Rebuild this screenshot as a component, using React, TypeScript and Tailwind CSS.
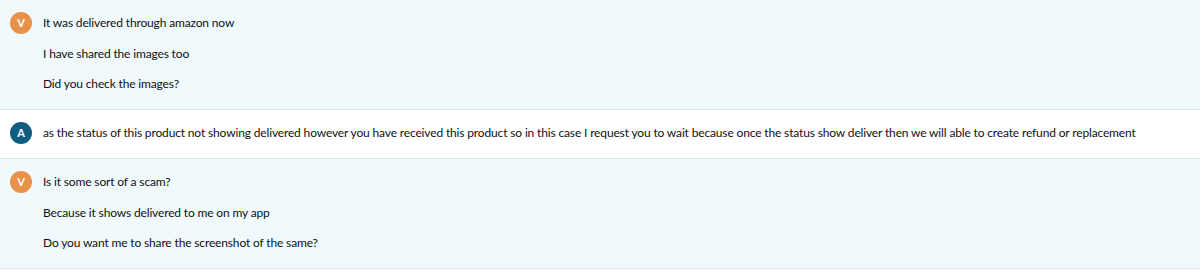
import React from 'react';

type Message = {
  id: number;
  sender: 'V' | 'A';
  lines: string[];
};

const MESSAGES: Message[] = [
  {
    id: 1,
    sender: 'V',
    lines: [
      'It was delivered through amazon now',
      'I have shared the images too',
      'Did you check the images?',
    ],
  },
  {
    id: 2,
    sender: 'A',
    lines: [
      'as the status of this product not showing delivered however you have received this product so in this case I request you to wait because once the status show deliver then we will able to create refund or replacement',
    ],
  },
  {
    id: 3,
    sender: 'V',
    lines: [
      'Is it some sort of a scam?',
      'Because it shows delivered to me on my app',
      'Do you want me to share the screenshot of the same?',
    ],
  },
];

const Avatar: React.FC<{ sender: 'V' | 'A' }> = ({ sender }) => (
  <div
    className={`w-[22px] h-[22px] -mt-px rounded-full flex items-center justify-center shrink-0 text-white text-[11px] font-bold tracking-normal ${
      sender === 'V' ? 'bg-[#e8914a]' : 'bg-[#0f5e80]'
    }`}
  >
    {sender}
  </div>
);

export default function App() {
  return (
    <div className="w-[1200px] font-['Lato',sans-serif] text-[12px] tracking-[-0.15px] text-[#0f1111]">
      {MESSAGES.map((msg) => (
        <div
          key={msg.id}
          className={`flex gap-[11px] pl-[10px] pt-[13px] border-b border-[#dde5e8] ${
            msg.sender === 'V' ? 'bg-[#f0f9fc] pb-[15px]' : 'bg-white pb-[14px]'
          }`}
        >
          <Avatar sender={msg.sender} />
          <div className="flex flex-col gap-[10.5px]">
            {msg.lines.map((line, i) => (
              <p key={i} className="leading-[20px] whitespace-nowrap">
                {line}
              </p>
            ))}
          </div>
        </div>
      ))}
    </div>
  );
}
